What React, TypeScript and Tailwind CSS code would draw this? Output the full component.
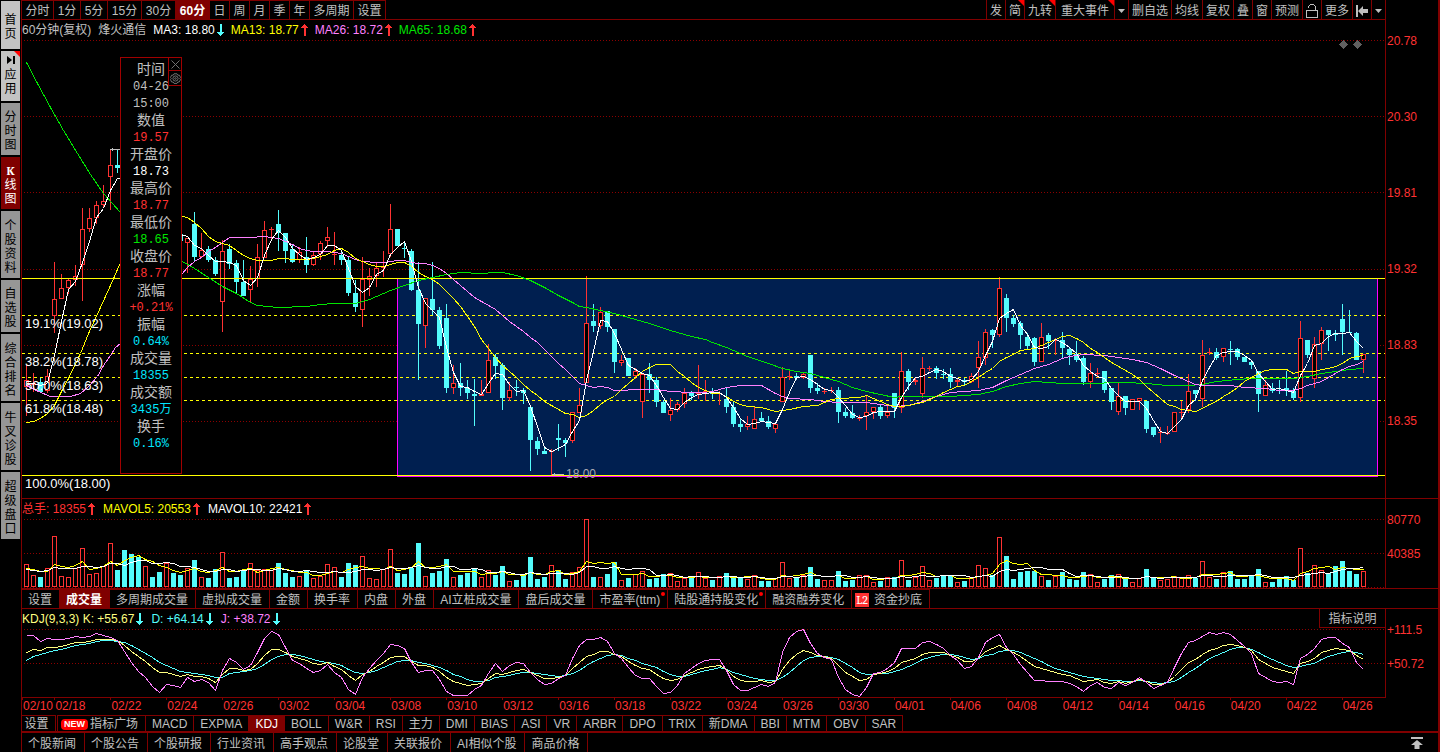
import { Fragment } from 'react';
import type { ReactNode } from 'react';

const LEFT = 22;
const WIDTH = 1363;
const STEP = 7;
const FIRST = 26;

// [rising, high, body top, body bottom, low], oldest first
const CANDLES = [
  [1, 365, 380, 386, 415], [1, 373, 383, 384, 391], [0, 378, 382, 391, 392], [1, 369, 376, 390, 392],
  [1, 262, 299, 315, 332], [1, 274, 288, 298, 298], [1, 278, 280, 287, 293], [1, 265, 276, 279, 285],
  [1, 208, 229, 264, 300], [1, 208, 218, 228, 231], [1, 201, 205, 217, 223], [1, 185, 201, 204, 206],
  [1, 149, 165, 176, 209], [0, 150, 165, 167, 172], [0, 165, 170, 202, 205], [0, 195, 202, 215, 220],
  [0, 210, 215, 225, 230], [1, 215, 220, 225, 230], [0, 215, 220, 228, 232], [0, 222, 228, 234, 238],
  [1, 228, 231, 236, 240], [0, 225, 228, 231, 236], [0, 234, 234, 240, 240], [1, 238, 238, 242, 272],
  [0, 212, 224, 256, 260], [1, 233, 250, 256, 257], [0, 246, 249, 259, 261], [0, 257, 260, 273, 275],
  [1, 240, 251, 301, 331], [0, 244, 249, 263, 268], [0, 260, 263, 281, 293], [0, 260, 282, 295, 295],
  [1, 266, 279, 289, 301], [1, 244, 257, 278, 286], [1, 221, 230, 257, 257], [1, 227, 229, 229, 239],
  [0, 210, 224, 232, 250], [0, 233, 233, 250, 262], [0, 245, 249, 261, 262], [1, 247, 252, 259, 262],
  [0, 237, 257, 264, 272], [1, 252, 255, 264, 265], [1, 241, 243, 253, 259], [1, 227, 237, 240, 246],
  [1, 232, 254, 254, 264], [0, 251, 255, 259, 264], [0, 257, 260, 292, 295], [0, 280, 293, 306, 311],
  [1, 257, 279, 309, 326], [1, 268, 276, 279, 295], [1, 262, 268, 275, 286], [1, 251, 266, 267, 276],
  [1, 204, 229, 253, 256], [0, 229, 229, 245, 245], [0, 241, 248, 248, 257], [0, 249, 251, 289, 290],
  [0, 262, 290, 323, 379], [1, 298, 298, 325, 347], [0, 262, 299, 309, 314], [0, 307, 310, 345, 348],
  [0, 304, 318, 387, 392], [1, 365, 383, 387, 393], [0, 363, 383, 387, 395], [0, 380, 388, 392, 398],
  [0, 379, 394, 395, 425], [1, 380, 394, 395, 395], [1, 344, 360, 392, 392], [0, 354, 357, 365, 378],
  [0, 363, 365, 397, 409], [1, 382, 390, 397, 400], [0, 380, 387, 387, 395], [0, 388, 390, 392, 403],
  [0, 406, 407, 439, 470], [0, 437, 441, 448, 454], [0, 446, 451, 453, 453], [1, 449, 451, 451, 475],
  [0, 424, 438, 439, 450], [0, 438, 440, 442, 456], [1, 412, 412, 440, 442], [1, 388, 405, 412, 412],
  [1, 276, 323, 382, 382], [0, 304, 321, 325, 331], [1, 307, 312, 325, 328], [0, 311, 311, 326, 331],
  [0, 329, 329, 361, 372], [1, 355, 360, 362, 365], [0, 358, 358, 375, 375], [1, 368, 371, 375, 378],
  [1, 374, 374, 401, 417], [0, 363, 374, 379, 392], [0, 377, 380, 401, 406], [0, 400, 402, 412, 412],
  [1, 398, 410, 414, 420], [1, 402, 404, 409, 411], [1, 388, 393, 403, 407], [0, 391, 393, 395, 399],
  [1, 365, 393, 393, 398], [1, 380, 391, 391, 400], [0, 388, 392, 393, 398], [1, 391, 393, 393, 404],
  [0, 388, 399, 406, 412], [0, 402, 407, 423, 426], [0, 419, 424, 426, 431], [1, 416, 424, 426, 429],
  [1, 407, 419, 428, 428], [0, 412, 418, 420, 421], [0, 416, 421, 426, 428], [1, 424, 424, 428, 432],
  [1, 367, 377, 401, 401], [1, 371, 376, 376, 379], [0, 373, 376, 377, 379], [1, 372, 374, 377, 378],
  [0, 355, 355, 387, 392], [0, 383, 388, 390, 393], [1, 388, 391, 391, 393], [1, 387, 390, 390, 392],
  [0, 387, 390, 411, 422], [0, 408, 412, 415, 417], [0, 405, 413, 417, 418], [1, 415, 418, 418, 420],
  [1, 396, 412, 415, 429], [1, 407, 407, 411, 418], [0, 405, 407, 415, 418], [1, 406, 412, 415, 417],
  [0, 393, 393, 407, 417], [1, 352, 371, 407, 412], [0, 369, 371, 381, 389], [1, 378, 380, 381, 384],
  [1, 357, 368, 393, 397], [1, 366, 368, 368, 370], [0, 366, 368, 372, 378], [0, 369, 374, 374, 378],
  [0, 368, 374, 381, 387], [1, 378, 380, 381, 385], [0, 378, 380, 381, 384], [1, 373, 376, 381, 382],
  [1, 341, 357, 367, 387], [1, 329, 332, 357, 364], [0, 329, 330, 334, 347], [1, 277, 288, 334, 336],
  [0, 294, 298, 317, 331], [0, 315, 318, 323, 326], [0, 321, 323, 334, 348], [0, 333, 337, 345, 348],
  [0, 337, 338, 361, 365], [1, 323, 337, 361, 361], [0, 333, 335, 340, 348], [1, 338, 340, 340, 354],
  [0, 332, 340, 347, 357], [0, 347, 349, 354, 364], [0, 341, 354, 359, 361], [0, 356, 358, 381, 384],
  [1, 363, 373, 381, 387], [1, 368, 373, 373, 377], [0, 371, 371, 389, 392], [0, 388, 388, 401, 409],
  [1, 383, 396, 411, 414], [0, 396, 396, 407, 414], [1, 399, 399, 409, 409], [1, 398, 398, 400, 409],
  [0, 401, 401, 428, 432], [0, 427, 427, 434, 436], [1, 427, 432, 432, 442], [1, 426, 433, 433, 434],
  [1, 412, 412, 431, 431], [1, 401, 412, 412, 417], [1, 374, 391, 409, 412], [0, 390, 390, 393, 400],
  [1, 340, 355, 398, 406], [1, 348, 352, 352, 354], [0, 348, 352, 357, 359], [1, 348, 348, 356, 361],
  [0, 341, 349, 349, 364], [0, 348, 349, 356, 359], [0, 357, 357, 361, 361], [0, 362, 362, 364, 368],
  [0, 371, 371, 393, 411], [1, 380, 385, 395, 395], [0, 383, 388, 390, 392], [0, 380, 390, 390, 393],
  [0, 371, 388, 390, 395], [0, 388, 391, 397, 399], [1, 321, 338, 397, 401], [0, 340, 340, 354, 357],
  [1, 337, 344, 378, 387], [1, 327, 330, 343, 359], [0, 330, 330, 334, 350], [0, 330, 333, 334, 340],
  [0, 304, 319, 331, 354], [0, 310, 332, 332, 332], [0, 332, 333, 359, 359], [1, 354, 354, 359, 372],
];

const VOLUMES = [
  23, 12, 10, 19, 51, 11, 10, 19, 39, 13, 14, 21, 44, 17, 37, 33, 30, 21, 10, 15,
  24, 14, 12, 19, 27, 10, 9, 18, 35, 9, 10, 17, 24, 17, 18, 17, 24, 14, 10, 11,
  17, 9, 11, 23, 20, 10, 24, 22, 31, 9, 8, 18, 38, 14, 13, 19, 44, 11, 14, 16,
  28, 10, 12, 14, 18, 10, 17, 12, 21, 6, 7, 12, 30, 8, 10, 22, 17, 8, 15, 20,
  68, 10, 10, 13, 25, 7, 9, 13, 16, 8, 9, 13, 14, 6, 9, 10, 15, 9, 7, 11,
  14, 11, 9, 8, 12, 6, 6, 9, 25, 9, 10, 12, 20, 8, 7, 7, 16, 6, 7, 12,
  12, 5, 6, 10, 10, 27, 7, 10, 21, 7, 9, 12, 12, 5, 6, 10, 22, 19, 12, 50,
  31, 8, 15, 16, 16, 11, 7, 11, 15, 8, 7, 15, 13, 5, 8, 12, 13, 8, 5, 9,
  18, 10, 7, 8, 11, 9, 12, 9, 26, 10, 8, 15, 16, 8, 8, 11, 18, 5, 5, 8,
  11, 7, 39, 14, 22, 17, 14, 21, 26, 16, 13, 16,
];

// J and D, in thirds of a pixel below y = 490
const KDJ_J = [
  436, 436, 454, 443, 448, 448, 445, 439, 441, 437, 430, 436, 442, 450, 483, 515, 544, 561, 589, 607,
  583, 586, 591, 562, 573, 568, 577, 600, 540, 505, 516, 536, 526, 487, 444, 422, 433, 470, 510, 518,
  534, 545, 539, 521, 545, 562, 597, 613, 562, 535, 509, 490, 461, 466, 475, 517, 547, 539, 541, 567,
  604, 614, 616, 616, 598, 585, 548, 520, 542, 526, 517, 520, 545, 568, 583, 580, 565, 556, 505, 465,
  448, 448, 442, 453, 490, 505, 532, 555, 565, 565, 589, 610, 607, 586, 550, 534, 518, 509, 508, 508,
  541, 583, 601, 601, 591, 581, 589, 577, 485, 442, 424, 418, 458, 489, 500, 508, 562, 598, 611, 619,
  592, 548, 547, 533, 517, 475, 475, 475, 457, 454, 463, 473, 495, 510, 535, 527, 502, 455, 440, 433,
  470, 493, 521, 545, 571, 571, 574, 574, 574, 579, 589, 604, 586, 575, 590, 595, 576, 586, 575, 560,
  577, 595, 586, 577, 530, 488, 457, 451, 437, 427, 433, 427, 431, 450, 469, 489, 550, 562, 574, 577,
  574, 583, 505, 493, 473, 446, 442, 442, 460, 472, 515, 538,
];
const KDJ_D = [
  509, 499, 493, 485, 481, 476, 471, 466, 463, 460, 454, 451, 451, 452, 457, 466, 476, 488, 502, 517,
  526, 535, 543, 547, 550, 552, 556, 562, 560, 550, 545, 543, 541, 533, 522, 506, 497, 493, 493, 496,
  500, 506, 512, 515, 518, 525, 536, 547, 548, 545, 539, 530, 522, 513, 509, 511, 516, 520, 524, 531,
  541, 551, 559, 568, 572, 574, 571, 562, 559, 556, 550, 545, 545, 549, 553, 556, 559, 556, 550, 540,
  525, 512, 503, 496, 493, 496, 503, 510, 518, 524, 532, 542, 553, 559, 557, 551, 547, 541, 536, 532,
  536, 545, 553, 559, 563, 566, 569, 571, 562, 546, 527, 509, 502, 499, 499, 500, 506, 520, 532, 545,
  553, 553, 550, 548, 544, 536, 527, 518, 508, 500, 496, 493, 493, 495, 502, 506, 505, 496, 491, 482,
  479, 481, 487, 496, 505, 514, 524, 533, 539, 545, 551, 559, 562, 563, 567, 570, 571, 574, 574, 571,
  573, 577, 578, 577, 572, 562, 547, 533, 518, 505, 494, 485, 476, 472, 472, 476, 485, 497, 508, 517,
  526, 532, 528, 523, 518, 507, 497, 491, 486, 484, 487, 493,
];

const MA13 =
  '26,422 33,421 40,418 47,413 54,405 61,391 68,378 80,353 88,333 100,307 110,285 120,262 182,216 187,217 194,222 201,228 208,236 215,241 222,243 229,245 236,250 243,255 250,258 257,260 264,260 271,260 278,258 285,258 292,259 306,259 313,258 320,256 327,254 334,250 341,248 348,252 355,258 362,261 369,264 376,266 383,266 390,264 397,262 404,262 411,266 418,272 425,276 432,279 439,284 446,291 453,298 460,306 467,316 474,326 481,339 488,348 495,357 502,365 509,371 516,377 523,384 530,390 537,395 544,401 551,405 558,409 565,413 572,414 579,417 586,415 593,410 600,404 607,399 614,396 621,389 628,383 635,377 642,371 649,367 656,364 670,364 677,371 684,376 691,382 698,387 705,390 712,393 719,393 726,396 733,401 740,404 747,406 761,407 768,409 775,411 782,410 789,409 803,406 817,405 824,402 831,399 838,398 859,397 866,395 873,398 880,401 887,404 894,406 901,406 908,405 922,402 929,399 936,396 943,392 950,389 957,386 964,385 971,381 978,377 985,372 992,368 999,361 1006,357 1013,354 1020,350 1027,349 1034,348 1041,345 1048,342 1055,339 1062,336 1069,335 1076,338 1083,342 1090,348 1097,352 1104,357 1111,362 1118,366 1125,370 1132,374 1139,379 1146,386 1153,392 1160,398 1167,404 1174,406 1181,409 1188,410 1195,411 1202,408 1209,404 1216,401 1223,396 1230,392 1237,387 1244,381 1251,377 1258,373 1265,370 1272,369 1286,369 1293,373 1300,371 1314,371 1321,369 1328,368 1335,366 1342,363 1349,358 1356,356 1363,355';
const MA26 =
  '26,385 38,391 50,396 70,396 80,393 88,386 97,376 103,365 110,355 115,347 120,343 182,273 187,267 194,261 201,257 208,251 215,247 222,242 229,237 250,237 264,236 278,238 285,241 292,244 299,248 306,250 313,251 327,251 334,252 341,253 348,256 355,259 362,261 376,262 383,262 390,261 397,260 404,260 411,262 418,263 425,263 432,265 439,268 446,273 453,279 460,285 467,291 474,297 481,301 488,305 495,309 502,315 509,321 516,326 523,331 530,337 537,342 544,349 551,356 558,363 565,369 572,376 579,383 586,385 593,387 600,386 607,387 614,390 621,390 635,389 656,389 663,390 670,391 691,392 702,392 712,391 719,389 726,387 740,385 761,385 768,389 775,393 782,396 789,398 810,399 824,401 838,402 866,402 880,404 894,406 908,405 922,401 936,396 950,392 964,391 978,390 992,387 1006,380 1020,374 1034,368 1048,364 1062,358 1069,356 1083,354 1104,355 1118,357 1132,359 1146,362 1160,368 1174,375 1188,381 1195,384 1202,385 1230,385 1244,387 1265,388 1279,390 1293,390 1300,388 1307,385 1321,381 1328,377 1335,373 1342,369 1349,366 1356,364 1363,361';
const MA65 =
  '26,62 37,83 50,107 63,130 77,153 90,174 103,193 112,203 120,212 182,261 194,268 208,277 222,286 236,293 250,302 257,305 278,307 306,306 320,304 334,303 355,303 369,299 383,293 390,290 404,285 418,280 432,277 446,274 460,272 481,273 495,272 502,272 516,275 530,280 544,287 558,295 572,302 579,306 586,307 600,310 614,313 628,317 649,323 670,330 691,336 705,339 712,342 726,347 747,356 768,363 782,368 796,371 810,373 824,377 838,381 852,387 866,391 880,394 894,397 901,396 922,396 950,396 978,394 992,391 1006,386 1020,383 1034,381 1048,382 1062,383 1083,383 1125,382 1146,383 1167,385 1188,385 1202,384 1216,381 1237,379 1251,378 1293,378 1307,376 1321,373 1335,371 1349,369 1363,368';

const barX = (i: number) => FIRST + i * STEP;
const toPoints = (ys: number[]) => ys.map((y, i) => `${barX(i)},${Math.round(y)}`).join(' ');

function average(values: number[], span: number, before: number) {
  return values.map((_, i) => {
    let sum = 0;
    for (let k = i - span + 1; k <= i; k++) sum += k < 0 ? before : values[k];
    return sum / span;
  });
}

const closes = CANDLES.map(([up, , top, bottom]) => (up ? top : bottom));
const MA3 = toPoints(average(closes, 3, 385));
const MAVOL5 = toPoints(average(VOLUMES, 5, 18).map((v) => 587 - v));
const MAVOL10 = toPoints(average(VOLUMES, 10, 17).map((v) => 587 - v));
const LINE_J = toPoints(KDJ_J.map((v) => 490 + v / 3));
const LINE_D = toPoints(KDJ_D.map((v) => 490 + v / 3));
const LINE_K = toPoints(KDJ_J.map((v, i) => 490 + (v + 2 * KDJ_D[i]) / 9));

const FIB_LEVELS = [
  { label: '19.1%(19.02)', y: 315 },
  { label: '38.2%(18.78)', y: 353 },
  { label: '50.0%(18.63)', y: 377 },
  { label: '61.8%(18.48)', y: 400 },
  { label: '100.0%(18.00)', y: 475 },
];

const DATES = [
  '02/10', '02/18', '02/22', '02/24', '02/26', '03/02', '03/04', '03/08', '03/10', '03/12', '03/16', '03/18', '03/22',
  '03/24', '03/26', '03/30', '04/01', '04/06', '04/08', '04/12', '04/14', '04/16', '04/20', '04/22', '04/26',
];
const DATE_X = DATES.map((_, i) => (i === 0 ? 22 : i === 1 ? 54 : 110 + (i - 2) * 56));

const SIDE_ITEMS = [
  { label: '分时图', size: 'h-[52px] bg-[#969696] text-black' },
  { label: 'K线图', size: 'h-[52px] bg-[#800000] text-white' },
  { label: '个股资料', size: 'h-[67px] bg-[#969696] text-black' },
  { label: '自选股', size: 'h-[52px] bg-[#969696] text-black' },
  { label: '综合排名', size: 'h-[67px] bg-[#969696] text-black' },
  { label: '牛叉诊股', size: 'h-[67px] bg-[#969696] text-black' },
  { label: '超级盘口', size: 'h-[67px] bg-[#969696] text-black' },
];

const PERIODS = [
  { label: '分时', width: 'w-8' },
  { label: '1分', width: 'w-[27px]' },
  { label: '5分', width: 'w-[27px]' },
  { label: '15分', width: 'w-[34px]' },
  { label: '30分', width: 'w-[34px]' },
  { label: '60分', width: 'w-[34px]' },
  { label: '日', width: 'w-5' },
  { label: '周', width: 'w-5' },
  { label: '月', width: 'w-5' },
  { label: '季', width: 'w-5' },
  { label: '年', width: 'w-5' },
  { label: '多周期', width: 'w-11' },
  { label: '设置', width: 'w-8' },
];

const DETAILS = [
  { label: '时间', values: ['04-26', '15:00'], color: 'text-[#c0c0c0]' },
  { label: '数值', values: ['19.57'], color: 'text-[#ff3232]' },
  { label: '开盘价', values: ['18.73'], color: 'text-white' },
  { label: '最高价', values: ['18.77'], color: 'text-[#ff3232]' },
  { label: '最低价', values: ['18.65'], color: 'text-[#00e600]' },
  { label: '收盘价', values: ['18.77'], color: 'text-[#ff3232]' },
  { label: '涨幅', values: ['+0.21%'], color: 'text-[#ff3232]' },
  { label: '振幅', values: ['0.64%'], color: 'text-[#00e6ff]' },
  { label: '成交量', values: ['18355'], color: 'text-[#00e6ff]' },
  { label: '成交额', values: ['3435万'], color: 'text-[#00e6ff]' },
  { label: '换手', values: ['0.16%'], color: 'text-[#00e6ff]' },
];

const VOLUME_TABS = ['设置', '成交量', '多周期成交量', '虚拟成交量', '金额', '换手率', '内盘', '外盘', 'AI立桩成交量', '盘后成交量', '市盈率(ttm)', '陆股通持股变化', '融资融券变化'];
const MARKED_TABS = ['市盈率(ttm)', '陆股通持股变化'];
const INDICATORS = ['MACD', 'EXPMA', 'KDJ', 'BOLL', 'W&R', 'RSI', '主力', 'DMI', 'BIAS', 'ASI', 'VR', 'ARBR', 'DPO', 'TRIX', '新DMA', 'BBI', 'MTM', 'OBV', 'SAR'];
const NEWS_TABS = ['个股新闻', '个股公告', '个股研报', '行业资讯', '高手观点', '论股堂', '关联报价', 'AI相似个股', '商品价格'];

function Arrow({ up = false }: { up?: boolean }) {
  return (
    <svg width="7" height="12" viewBox="0 0 7 12" className={up ? 'text-[#ff3232]' : 'rotate-180 text-[#54fcfc]'} aria-hidden="true">
      <path d="M3.5 0L7 4H4.5V12H2.5V4H0Z" fill="currentColor" shapeRendering="crispEdges" />
    </svg>
  );
}

function Reading({ color, up = false, children }: { color: string; up?: boolean; children: ReactNode }) {
  return (
    <span className={`flex items-center gap-0.5 ${color}`}>
      {children}
      <Arrow up={up} />
    </span>
  );
}

function Chart({ top, height, size, children }: { top: number; height: number; size: string; children: ReactNode }) {
  return (
    <svg
      className={`block w-full ${size}`}
      viewBox={`${LEFT} ${top} ${WIDTH} ${height}`}
      preserveAspectRatio="none"
      shapeRendering="crispEdges"
      aria-hidden="true"
    >
      {children}
    </svg>
  );
}

function Dotted({ y }: { y: number }) {
  return <path d={`M24 ${y + 0.5}H1385`} stroke="#8c0000" strokeDasharray="1 2" />;
}

function Line({ points, color }: { points: string; color: string }) {
  return <polyline points={points} transform="translate(.5 .5)" fill="none" stroke={color} />;
}

function Bar({ i, up, top, bottom }: { i: number; up: boolean; top: number; bottom: number }) {
  const x = barX(i);
  const h = bottom - top + 1;
  return (
    <>
      <rect x={x - 2} y={top} width="5" height={h} fill={up ? '#ff3232' : '#54fcfc'} />
      {up && h > 2 && <rect x={x - 1} y={top + 1} width="3" height={h - 2} fill="#000" />}
    </>
  );
}

function Axis({ labels, gap, size }: { labels: string[]; gap: string; size: string }) {
  return (
    <div className={`w-[53px] shrink-0 border-l border-[#800000] pt-[11px] pl-px leading-5 text-[#ff3232] ${size}`}>
      {labels.map((label) => (
        <div key={label} className={gap}>{label}</div>
      ))}
    </div>
  );
}

function Corner() {
  return (
    <svg width="6" height="6" viewBox="0 0 6 6" className="absolute top-0 right-0" aria-hidden="true">
      <path d="M0 0H6V6Z" fill="#f00" />
    </svg>
  );
}

function Tool({ width, label, children, mark = false }: { width: string; label?: string; children: ReactNode; mark?: boolean }) {
  return (
    <button type="button" aria-label={label} className={`relative flex h-full shrink-0 items-center justify-center border-l border-[#800000] pt-0.5 ${width}`}>
      {children}
      {mark && <Corner />}
    </button>
  );
}

function Caret() {
  return (
    <svg width="7" height="4" viewBox="0 0 7 4" aria-hidden="true">
      <path d="M0 0H7L3.5 4Z" fill="currentColor" />
    </svg>
  );
}

function SideBar() {
  return (
    <aside className="flex w-[22px] shrink-0 flex-col gap-0.5 border-r border-[#800000] pt-px pr-px pl-px leading-[14px]">
      <button type="button" className="h-12 bg-[#c3c3c3] px-[3px] pt-1 text-black">首页</button>
      <button type="button" className="relative flex h-[50px] flex-col items-center justify-center bg-[#c3c3c3] px-[3px] text-black">
        <svg width="8" height="8" viewBox="0 0 8 8" className="mb-1" aria-hidden="true">
          <path d="M0 0L5 4L0 8ZM6 0H8V8H6Z" fill="currentColor" />
        </svg>
        应用
        <Corner />
      </button>
      {SIDE_ITEMS.map((item) => (
        <button key={item.label} type="button" className={`px-[3px] pt-1 ${item.size}`}>
          {item.label === 'K线图' ? <><b className="block font-serif">K</b>线图</> : item.label}
        </button>
      ))}
    </aside>
  );
}

function Header() {
  return (
    <header className="mr-[52px] flex h-5 justify-between border-b border-[#800000]">
      <nav className="flex border-t border-[#800000]" aria-label="周期">
        {PERIODS.map(({ label, width }) => (
          <button
            key={label}
            type="button"
            className={`shrink-0 border-r border-[#800000] pt-px text-center whitespace-nowrap ${width} ${label === '60分' ? 'bg-[#800000] font-bold text-white' : ''}`}
          >
            {label}
          </button>
        ))}
      </nav>
      <div className="flex border-r border-[#800000]">
        <Tool width="w-[19px]">发</Tool>
        <Tool width="w-[19px]" mark>简</Tool>
        <Tool width="w-[31px]" mark>九转</Tool>
        <Tool width="w-[59px]" mark>重大事件</Tool>
        <Tool width="w-[14px]" label="事件列表"><Caret /></Tool>
        <Tool width="w-[43px]">删自选</Tool>
        <Tool width="w-[31px]">均线</Tool>
        <Tool width="w-[31px]">复权</Tool>
        <Tool width="w-[19px]">叠</Tool>
        <Tool width="w-[19px]">窗</Tool>
        <Tool width="w-[31px]">预测</Tool>
        <Tool width="w-[19px]" label="锁定">
          <svg width="12" height="14" viewBox="0 0 12 14" fill="none" stroke="currentColor" shapeRendering="crispEdges" aria-hidden="true">
            <path d="M.5 6.5H11.5V13.5H.5Z" />
            <path d="M9.5 6V2.5L7.5 .5H4.5L2.5 2.5V3.5" />
          </svg>
        </Tool>
        <Tool width="w-[31px]">更多</Tool>
        <Tool width="w-[19px]" label="回到最左">
          <svg width="12" height="12" viewBox="0 0 12 12" aria-hidden="true">
            <path d="M0 0H2V12H0ZM2 6L7 1V4H12V8H7V11Z" fill="currentColor" />
          </svg>
        </Tool>
        <Tool width="w-[14px]" label="展开"><Caret /></Tool>
      </div>
    </header>
  );
}

function DetailPanel() {
  return (
    <div className="absolute top-[18px] left-[98px] h-[417px] w-[62px] border border-[#a00000] bg-black pt-[3px] text-center leading-[17px]">
      <dl>
        {DETAILS.map((item) => (
          <Fragment key={item.label}>
            <dt className="text-sm leading-[17px]">{item.label}</dt>
            {item.values.map((value) => (
              <dd key={value} className={`h-[17px] pt-0.5 font-['Liberation_Mono','Noto_Sans_CJK_SC',monospace] leading-[15px] ${item.color}`}>{value}</dd>
            ))}
          </Fragment>
        ))}
      </dl>
      <div className="absolute -top-px -right-px w-[14px] border border-[#a00000] bg-black text-[#707070]">
        <button type="button" aria-label="关闭" className="flex h-[13px] w-full items-center justify-center border-b border-[#a00000]">
          <svg width="9" height="9" viewBox="0 0 9 9" stroke="currentColor" aria-hidden="true">
            <path d="M.5 .5L8.5 8.5M8.5 .5L.5 8.5" />
          </svg>
        </button>
        <button type="button" aria-label="面板设置" className="flex h-[14px] w-full items-center justify-center">
          <svg width="11" height="11" viewBox="0 0 11 11" fill="none" stroke="currentColor" aria-hidden="true">
            <path d="M4 .8H7L7.8 2.2H9.4L10.5 4.6L9.7 5.5L10.5 6.6L9.2 9H7.8L7 10.4H4L3.2 9H1.6L.5 6.6L1.3 5.5L.5 4.6L1.6 2.2H3.2Z" />
            <circle cx="5.5" cy="5.5" r="2.6" />
            <circle cx="5.5" cy="5.5" r=".8" />
          </svg>
        </button>
      </div>
    </div>
  );
}

function PricePanel() {
  return (
    <section className="flex border-b border-[#800000]">
      <div className="min-w-0 flex-1">
        <div className="flex h-[19px] items-center gap-[7px] whitespace-nowrap">
          <span>60分钟(复权)</span>
          <span>烽火通信</span>
          <Reading color="text-white">MA3: 18.80</Reading>
          <Reading color="text-[#ffff00]" up>MA13: 18.77</Reading>
          <Reading color="text-[#ff80ff]" up>MA26: 18.72</Reading>
          <Reading color="text-[#00e600]" up>MA65: 18.68</Reading>
        </div>
        <div className="relative">
          <Chart top={39} height={459} size="h-[459px]">
            {[40, 116, 192, 269, 345, 421].map((y) => <Dotted key={y} y={y} />)}
            <rect x="397" y="278" width="981" height="199" fill="#001f50" />
            <path d="M397.5 279V476.5H1377.5V279" fill="none" stroke="#ff00ff" />
            {FIB_LEVELS.slice(0, 4).map(({ y }) => (
              <path key={y} d={`M22 ${y + 0.5}H1385`} stroke="#ffff00" strokeDasharray="3 3" />
            ))}
            {CANDLES.map(([up, high, top, bottom, low], i) => (
              <Fragment key={i}>
                <rect x={barX(i)} y={high} width="1" height={low - high + 1} fill={up ? '#ff3232' : '#54fcfc'} />
                <Bar i={i} up={up === 1} top={top} bottom={bottom} />
              </Fragment>
            ))}
            <path d="M22 278.5H1385M22 475.5H1385" stroke="#ffff00" />
            <Line points={MA65} color="#00e600" />
            <Line points={MA26} color="#ff80ff" />
            <Line points={MA13} color="#ffff00" />
            <Line points={MA3} color="#fff" />
            <path d="M110 149.5H120M112.5 148V151M552 474.5H564M554.5 473V476" stroke="#c0c0c0" />
            <path d="M1343.5 40L1348 44.5L1343.5 49L1339 44.5ZM1357.5 40L1362 44.5L1357.5 49L1353 44.5Z" fill="#606060" />
          </Chart>
          {FIB_LEVELS.map(({ label, y }) => (
            <span key={label} className="absolute left-[3px] text-[13px] leading-4 text-white" style={{ top: y - 38 }}>{label}</span>
          ))}
          <span className="absolute top-[427px] leading-4 text-[#a8a8b0]" style={{ left: `${((566 - LEFT) / WIDTH) * 100}%` }}>18.00</span>
          <DetailPanel />
        </div>
      </div>
      <Axis labels={['20.78', '20.30', '19.81', '19.32', '18.83', '18.35']} gap="h-[76px]" size="" />
    </section>
  );
}

function VolumePanel() {
  return (
    <section className="flex border-b border-[#800000]">
      <div className="min-w-0 flex-1">
        <div className="flex h-[19px] items-center gap-2 whitespace-nowrap">
          <Reading color="text-[#ff3232]" up>总手: 18355</Reading>
          <Reading color="text-[#ffff00]" up>MAVOL5: 20553</Reading>
          <Reading color="text-white" up>MAVOL10: 22421</Reading>
        </div>
        <Chart top={518} height={70} size="h-[70px]">
          {[519, 553, 587].map((y) => <Dotted key={y} y={y} />)}
          {VOLUMES.map((v, i) => <Bar key={i} i={i} up={CANDLES[i][0] === 1} top={587 - v} bottom={586} />)}
          <Line points={MAVOL5} color="#ffff00" />
          <Line points={MAVOL10} color="#fff" />
        </Chart>
      </div>
      <Axis labels={['80770', '40385']} gap="h-[34px]" size="" />
    </section>
  );
}

function KdjPanel() {
  return (
    <section className="flex items-start">
      <div className="min-w-0 flex-1">
        <div className="flex h-[19px] items-center gap-2 whitespace-nowrap">
          <Reading color="text-[#ffff80]">KDJ(9,3,3) K: +55.67</Reading>
          <Reading color="text-[#54fcfc]">D: +64.14</Reading>
          <Reading color="text-[#ff80ff]">J: +38.72</Reading>
          <button type="button" className="ml-auto h-full w-[66px] border-b border-l border-[#800000] pt-0.5">指标说明</button>
        </div>
        <Chart top={628} height={72} size="h-[72px]">
          <Dotted y={629} />
          <Dotted y={663} />
          <Line points={LINE_D} color="#54fcfc" />
          <Line points={LINE_K} color="#ffff80" />
          <Line points={LINE_J} color="#ff80ff" />
          <path d="M22 697.5H1385" stroke="#800000" />
          {DATE_X.map((x) => <path key={x} d={`M${x + 0.5} 697V700`} stroke="#800000" />)}
        </Chart>
        <div className="flex h-[15px] leading-3 text-[#ff3232]">
          {DATES.map((date, i) => (
            <span key={date} className="min-w-0 basis-0 pl-px whitespace-nowrap" style={{ flexGrow: (DATE_X[i + 1] ?? LEFT + WIDTH) - DATE_X[i] }}>
              {date}
            </span>
          ))}
        </div>
      </div>
      <Axis labels={['+111.5', '+50.72']} gap="h-[34px]" size="h-[89px]" />
    </section>
  );
}

export default function App() {
  return (
    <div className="flex min-h-screen overflow-hidden border-r-2 border-[#800000] bg-black font-['Liberation_Sans','Noto_Sans_CJK_SC',sans-serif] text-xs text-[#c0c0c0]">
      <SideBar />
      <main className="min-w-0 flex-1">
        <Header />
        <PricePanel />
        <VolumePanel />

        <nav className="flex h-5 border-b border-[#800000]" aria-label="成交量指标">
          {VOLUME_TABS.map((label) => (
            <button
              key={label}
              type="button"
              className={`relative shrink-0 border-t border-r border-[#800000] pt-0.5 pr-[7px] pl-1.5 whitespace-nowrap ${label === '成交量' ? 'bg-[#800000] font-bold text-white' : ''}`}
            >
              {label}
              {MARKED_TABS.includes(label) && <i className="absolute top-0.5 right-0.5 size-1 rounded-full bg-[#f00]" />}
            </button>
          ))}
          <button type="button" className="flex shrink-0 items-center gap-[5px] border-t border-r border-[#800000] pt-px pr-[7px] pl-[3px]">
            <span className="bg-[#ff3232] px-px font-serif leading-[14px] text-white">L2</span>
            资金抄底
          </button>
        </nav>

        <KdjPanel />

        <nav className="flex h-[18px] border-b-2 border-[#800000]" aria-label="技术指标">
          <button type="button" className="mr-px w-[34px] shrink-0 border-t border-r border-[#800000] pr-1 leading-[17px]">设置</button>
          <button type="button" className="flex shrink-0 items-center gap-0.5 border-t border-r border-l border-[#800000] pt-px pr-[7px] pl-[3px] leading-[17px]">
            <span className="rounded-sm bg-[#f00] px-[3px] text-[9px] leading-[11px] font-bold text-white">NEW</span>
            指标广场
          </button>
          {INDICATORS.map((label) => (
            <button
              key={label}
              type="button"
              className={`shrink-0 border-t border-r border-[#800000] px-1.5 leading-[17px] whitespace-nowrap ${label === 'KDJ' ? 'bg-[#800000] text-white' : ''}`}
            >
              {label}
            </button>
          ))}
        </nav>

        <footer className="flex h-[19px] items-center">
          {NEWS_TABS.map((label) => (
            <a key={label} href="#" className="h-full shrink-0 border-r border-[#800000] pt-0.5 pr-2 pl-1.5 leading-[19px] whitespace-nowrap">{label}</a>
          ))}
          <button type="button" aria-label="返回顶部" className="mr-[15px] ml-auto">
            <svg width="12" height="12" viewBox="0 0 12 12" className="block" aria-hidden="true">
              <path d="M0 0H12V2H0ZM6 3L12 8H8.5V12H3.5V8H0Z" fill="currentColor" />
            </svg>
          </button>
        </footer>
      </main>
    </div>
  );
}
